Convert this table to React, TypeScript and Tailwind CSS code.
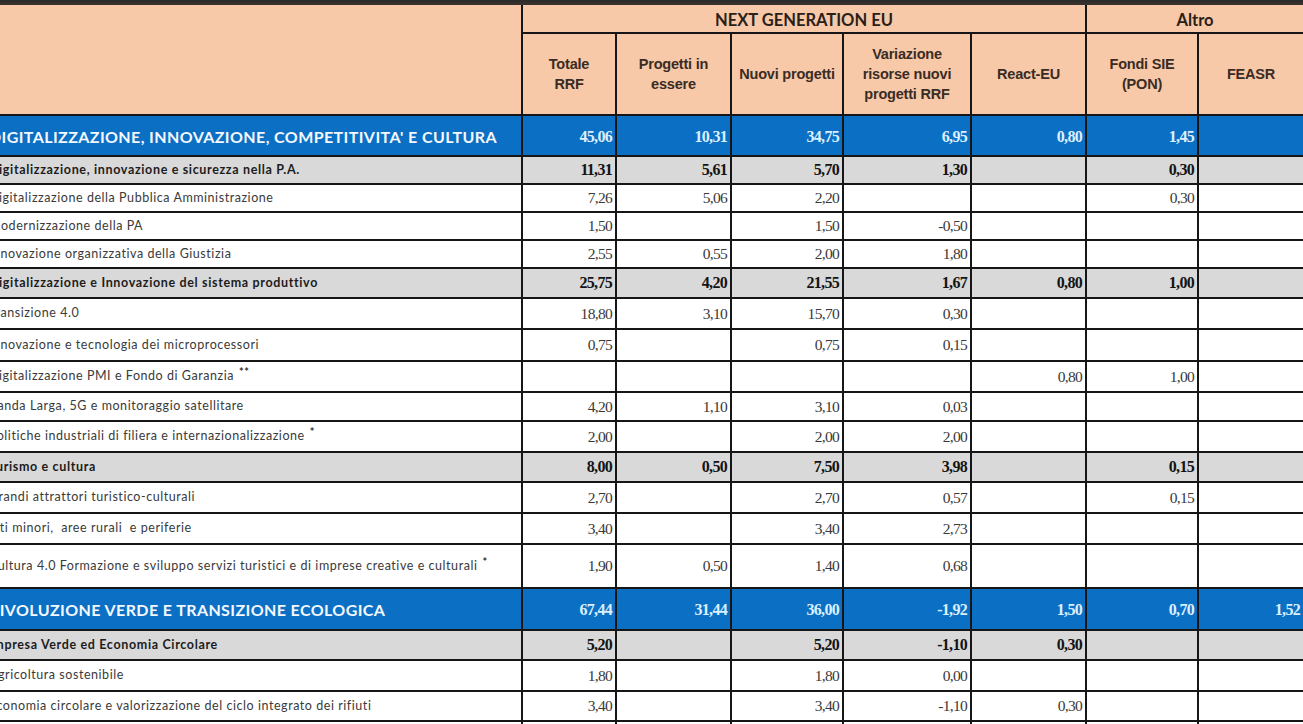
import { Fragment } from 'react';

type Row = {
  kind: 'blue' | 'gray' | 'item';
  label: string;
  sup?: string;
  values: string[];
  h: string;
};

const rows: Row[] = [
  { kind: 'blue', label: "DIGITALIZZAZIONE, INNOVAZIONE, COMPETITIVITA' E CULTURA", values: ['45,06', '10,31', '34,75', '6,95', '0,80', '1,45', ''], h: 'h-[39px]' },
  { kind: 'gray', label: 'Digitalizzazione, innovazione e sicurezza nella P.A.', values: ['11,31', '5,61', '5,70', '1,30', '', '0,30', ''], h: 'h-[26px]' },
  { kind: 'item', label: 'Digitalizzazione della Pubblica Amministrazione', values: ['7,26', '5,06', '2,20', '', '', '0,30', ''], h: 'h-[26px]' },
  { kind: 'item', label: 'Modernizzazione della PA', values: ['1,50', '', '1,50', '-0,50', '', '', ''], h: 'h-[26px]' },
  { kind: 'item', label: 'Innovazione organizzativa della Giustizia', values: ['2,55', '0,55', '2,00', '1,80', '', '', ''], h: 'h-[26px]' },
  { kind: 'gray', label: 'Digitalizzazione e Innovazione del sistema produttivo', values: ['25,75', '4,20', '21,55', '1,67', '0,80', '1,00', ''], h: 'h-[28px]' },
  { kind: 'item', label: 'Transizione 4.0', values: ['18,80', '3,10', '15,70', '0,30', '', '', ''], h: 'h-[29px]' },
  { kind: 'item', label: 'Innovazione e tecnologia dei microprocessori', values: ['0,75', '', '0,75', '0,15', '', '', ''], h: 'h-[30px]' },
  { kind: 'item', label: 'Digitalizzazione PMI e Fondo di Garanzia', sup: '**', values: ['', '', '', '', '0,80', '1,00', ''], h: 'h-[29px]' },
  { kind: 'item', label: 'Banda Larga, 5G e monitoraggio satellitare', values: ['4,20', '1,10', '3,10', '0,03', '', '', ''], h: 'h-[27px]' },
  { kind: 'item', label: 'Politiche industriali di filiera e internazionalizzazione', sup: '*', values: ['2,00', '', '2,00', '2,00', '', '', ''], h: 'h-[29px]' },
  { kind: 'gray', label: 'Turismo e cultura', values: ['8,00', '0,50', '7,50', '3,98', '', '0,15', ''], h: 'h-[28px]' },
  { kind: 'item', label: 'Grandi attrattori turistico-culturali', values: ['2,70', '', '2,70', '0,57', '', '0,15', ''], h: 'h-[29px]' },
  { kind: 'item', label: 'Siti minori,  aree rurali  e periferie', values: ['3,40', '', '3,40', '2,73', '', '', ''], h: 'h-[29px]' },
  { kind: 'item', label: 'Cultura 4.0 Formazione e sviluppo servizi turistici e di imprese creative e culturali', sup: '*', values: ['1,90', '0,50', '1,40', '0,68', '', '', ''], h: 'h-[42px]' },
  { kind: 'blue', label: 'RIVOLUZIONE VERDE E TRANSIZIONE ECOLOGICA', values: ['67,44', '31,44', '36,00', '-1,92', '1,50', '0,70', '1,52'], h: 'h-[40px]' },
  { kind: 'gray', label: 'Impresa Verde ed Economia Circolare', values: ['5,20', '', '5,20', '-1,10', '0,30', '', ''], h: 'h-[28px]' },
  { kind: 'item', label: 'Agricoltura sostenibile', values: ['1,80', '', '1,80', '0,00', '', '', ''], h: 'h-[29px]' },
  { kind: 'item', label: 'Economia circolare e valorizzazione del ciclo integrato dei rifiuti', values: ['3,40', '', '3,40', '-1,10', '0,30', '', ''], h: 'h-[28px]' },
  { kind: 'item', label: '', values: ['', '', '', '', '', '', ''], h: 'h-[30px]' },
];

const headers = [
  ['Totale', 'RRF'],
  ['Progetti in', 'essere'],
  ['Nuovi progetti'],
  ['Variazione', 'risorse nuovi', 'progetti RRF'],
  ['React-EU'],
  ['Fondi SIE', '(PON)'],
  ['FEASR'],
];

const calibri = "font-['Lato','Open_Sans',sans-serif]";
const times = "font-['Liberation_Serif','Times_New_Roman',serif]";

function LabelCell({ row }: { row: Row }) {
  const bg = row.kind === 'blue' ? 'bg-[#0b6fc3]' : row.kind === 'gray' ? 'bg-[#d9d9d9]' : 'bg-white';
  const text =
    row.kind === 'blue'
      ? 'text-[16px] font-bold text-[#f4f8ff] tracking-[0.4px] pt-[2px]'
      : row.kind === 'gray'
        ? 'text-[12.5px] font-bold text-[#1c1c1c] tracking-[0.65px]'
        : 'text-[12.5px] text-[#3a3a3a] tracking-[0.55px]';
  return (
    <div className={`${row.h} ${bg} ${calibri} ${text} flex items-center pl-[2px] whitespace-pre overflow-hidden`}>
      {row.label}
      {row.sup && <span className="ml-[5px] -mt-[8px] text-[11px] font-bold text-[#333]">{row.sup}</span>}
    </div>
  );
}

function NumCell({ row, value }: { row: Row; value: string }) {
  const bg = row.kind === 'blue' ? 'bg-[#0b6fc3]' : row.kind === 'gray' ? 'bg-[#d9d9d9]' : 'bg-white';
  const text =
    row.kind === 'blue'
      ? 'font-bold text-[#dcefff] text-[16px] pt-[2px]'
      : row.kind === 'gray'
        ? 'font-bold text-[#141414] text-[16px]'
        : 'text-[#3a3a3a] text-[15.5px]';
  return (
    <div className={`${row.h} ${bg} ${times} ${text} tracking-[-0.7px] flex items-center justify-end pr-[3px]`}>
      {value}
    </div>
  );
}

export default function App() {
  return (
    <div className="w-[1303px] h-[724px] overflow-hidden bg-[#161616]">
      <div className="h-[5px] bg-gradient-to-b from-[#2a2a2a] to-[#3a3430]" />
      <div className="-ml-[13px] w-max grid grid-cols-[534px_92px_113px_110px_126px_113px_110px_104px] gap-[2px] bg-[#161616]">
        <div className="row-span-2 bg-[#f7c9a8]" />
        <div className={`col-span-5 h-[27px] pt-[3px] bg-[#f7c9a8] ${calibri} text-[16.5px] font-bold text-[#2a2018] flex items-center justify-center`}>
          NEXT GENERATION EU
        </div>
        <div className={`col-span-2 h-[27px] pt-[3px] bg-[#f7c9a8] ${calibri} text-[16.5px] font-bold text-[#2a2018] flex items-center justify-center`}>
          Altro
        </div>
        {headers.map((lines, i) => (
          <div
            key={i}
            className="h-[80px] bg-[#f7c9a8] font-['Liberation_Sans',Arial,sans-serif] text-[14.5px] font-bold leading-[20px] tracking-[-0.2px] text-[#3a2c24] flex flex-col items-center justify-center text-center"
          >
            {lines.map((l) => (
              <span key={l}>{l}</span>
            ))}
          </div>
        ))}
        {rows.map((row, r) => (
          <Fragment key={r}>
            <LabelCell row={row} />
            {row.values.map((v, c) => (
              <NumCell key={c} row={row} value={v} />
            ))}
          </Fragment>
        ))}
      </div>
    </div>
  );
}
